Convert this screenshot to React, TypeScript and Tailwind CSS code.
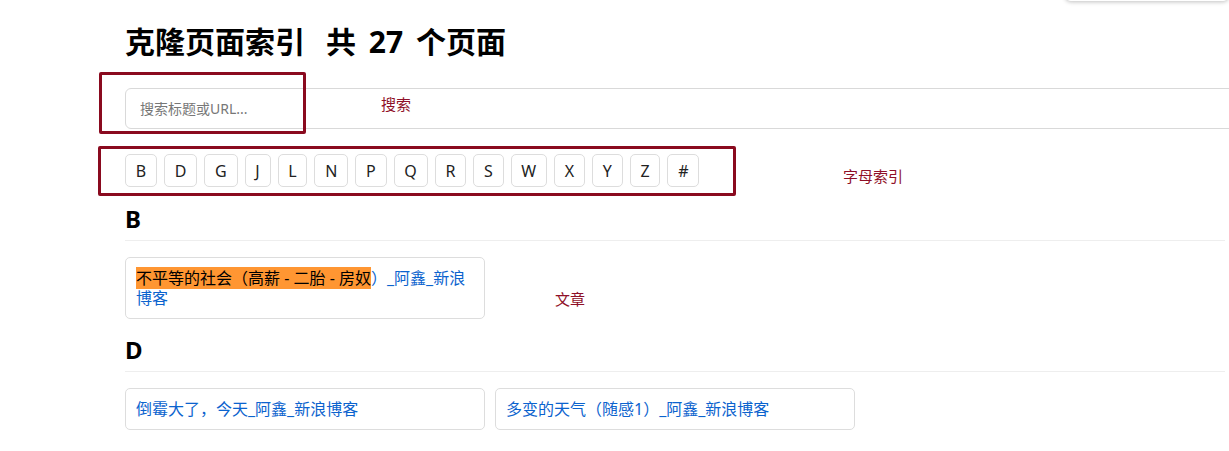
import React from "react";

const letters = ["B", "D", "G", "J", "L", "N", "P", "Q", "R", "S", "W", "X", "Y", "Z", "#"];

const font = { fontFamily: '"Noto Sans", "Noto Sans CJK SC", sans-serif' };

function Card({ children }: { children: React.ReactNode }) {
  return (
    <div className="w-[360px] rounded-[5px] border border-[#dddddd] bg-white p-[10px] text-[16px] leading-[20px] text-[#0b63ce]">
      {children}
    </div>
  );
}

function Section({ letter, children }: { letter: string; children: React.ReactNode }) {
  return (
    <section className="flex flex-col gap-[16px]">
      <h2 className="border-b border-[#eeeeee] pb-[6px] text-[24px] font-bold leading-[30px]">{letter}</h2>
      <div className="flex gap-[10px]">{children}</div>
    </section>
  );
}

function Note({ className, children }: { className: string; children: React.ReactNode }) {
  return <div className={`absolute text-[15px] leading-[20px] text-[#8f1028] ${className}`}>{children}</div>;
}

export default function App() {
  return (
    <div className="relative min-h-[451px] w-full overflow-hidden bg-white text-black" style={font}>
      <div className="absolute right-0 top-[-100px] h-[101px] w-[164px] rounded-b-[6px] bg-white shadow-[0_1px_4px_rgba(0,0,0,0.25)]" />
      <main className="flex flex-col pl-[125px] pt-[24px]">
        <h1 className="flex text-[30px] font-bold leading-[36px]">
          <span>克隆页面索引</span>
          <span className="ml-[21px] [word-spacing:5px]">共 27 个页面</span>
        </h1>
        <div className="mt-[28px] w-[1130px]">
          <input
            className="h-[41px] w-full rounded-[6px] border border-[#d9d9d9] px-[14px] text-[14px] text-black outline-none placeholder:text-[#777777]"
            placeholder="搜索标题或URL..."
          />
        </div>
        <div className="mt-[25px] flex gap-[7px]">
          {letters.map((l) => (
            <div
              key={l}
              className="flex h-[33px] items-center rounded-[5px] border border-[#dddddd] px-[9.8px] text-[16px] text-[#222222]"
            >
              {l}
            </div>
          ))}
        </div>
        <div className="mt-[17px] flex w-[1100px] flex-col gap-[16px]">
          <Section letter="B">
            <Card>
              <span className="bg-[#ff9632] text-black">不平等的社会（高薪 - 二胎 - 房奴</span>）_阿鑫_新浪博客
            </Card>
          </Section>
          <Section letter="D">
            <Card>倒霉大了，今天_阿鑫_新浪博客</Card>
            <Card>多变的天气（随感1）_阿鑫_新浪博客</Card>
          </Section>
        </div>
      </main>
      <div className="absolute left-[99px] top-[72px] h-[62px] w-[207px] rounded-[2px] border-[3px] border-[#8a0a1f]" />
      <div className="absolute left-[98px] top-[146px] h-[50px] w-[638px] rounded-[2px] border-[3px] border-[#8a0a1f]" />
      <Note className="left-[381px] top-[94px]">搜索</Note>
      <Note className="left-[843px] top-[166px]">字母索引</Note>
      <Note className="left-[555px] top-[289px]">文章</Note>
    </div>
  );
}
